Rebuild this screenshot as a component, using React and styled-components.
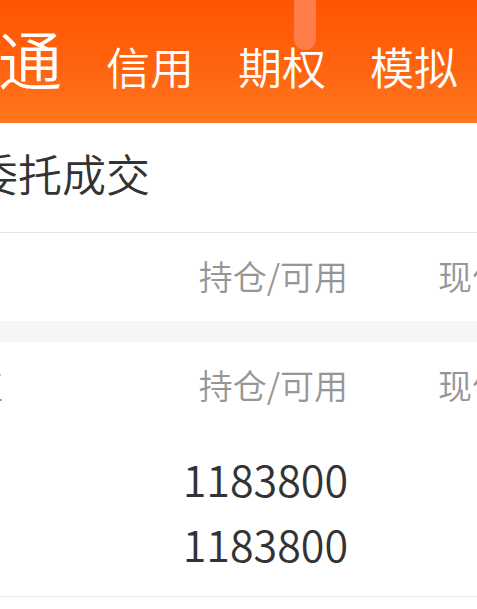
import React from "react";
import styled, { createGlobalStyle } from "styled-components";

const Global = createGlobalStyle`
  html, body { margin: 0; padding: 0; background: #ffffff; overflow: hidden; }
  body { font-family: "Noto Sans CJK SC", "Noto Sans", sans-serif; font-weight: 350; }
  * { box-sizing: border-box; }
`;

const Page = styled.div`
  width: 477px;
  height: 609px;
  overflow: hidden;
  position: relative;
  background: #ffffff;
`;

const Header = styled.header`
  position: relative;
  height: 123px;
  background: linear-gradient(180deg, #ff5500 0%, #ff6410 55%, #ff761f 100%);
  display: flex;
  align-items: baseline;
  gap: 44px;
  padding-top: 25px;
  color: #ffffff;
  white-space: nowrap;
`;

const Tab = styled.span`
  font-size: ${(p) => (p.$active ? "64px" : "44px")};
  line-height: 1;
  margin-left: ${(p) => (p.$active ? "-2px" : "0")};
  font-weight: 350;
`;

const ScrollPill = styled.div`
  position: absolute;
  left: 294px;
  top: 0;
  width: 22px;
  height: 50px;
  border-radius: 0 0 11px 11px;
  background: #ff7d4a;
`;

const TitleRow = styled.div`
  height: 110px;
  display: flex;
  align-items: center;
  border-bottom: 1px solid #e3e3e3;
  white-space: nowrap;
`;

const Title = styled.span`
  font-size: 44px;
  line-height: 1;
  color: #333333;
  margin-left: -26px;
  margin-top: -10px;
`;

const ColRow = styled.div`
  display: flex;
  align-items: center;
  white-space: nowrap;
  height: ${(p) => p.$h || "auto"};
`;

const LeadCell = styled.div`
  flex: 0 0 100px;
  margin-left: -97px;
  text-align: right;
  overflow: hidden;
`;

const AmountCell = styled.div`
  flex: 0 0 345px;
  text-align: right;
`;

const PriceCell = styled.div`
  flex: 0 0 auto;
  margin-left: 90px;
`;

const HeadText = styled.span`
  font-size: 34px;
  line-height: 1;
  color: #969696;
`;

const Gap = styled.div`
  height: 21px;
  background: #f5f6f8;
`;

const DataBlock = styled.div`
  padding: 16px 0 20px;
  border-bottom: 1px solid #e6e6e6;
`;

const NumLine = styled.div`
  font-size: 43px;
  line-height: 65px;
  color: #333333;
`;

const HeadRow = ({ lead }) => (
  <ColRow $h="88px">
    <LeadCell>{lead ? <HeadText>{lead}</HeadText> : null}</LeadCell>
    <AmountCell>
      <HeadText>持仓/可用</HeadText>
    </AmountCell>
    <PriceCell>
      <HeadText>现价/成本</HeadText>
    </PriceCell>
  </ColRow>
);

export default function App() {
  return (
    <Page>
      <Global />
      <Header>
        <Tab $active>通</Tab>
        <Tab>信用</Tab>
        <Tab>期权</Tab>
        <Tab>模拟</Tab>
        <ScrollPill />
      </Header>
      <TitleRow>
        <Title>委托成交</Title>
      </TitleRow>
      <HeadRow />
      <Gap />
      <HeadRow lead="市值" />
      <DataBlock>
        <ColRow>
          <LeadCell />
          <AmountCell>
            <NumLine>1183800</NumLine>
            <NumLine>1183800</NumLine>
          </AmountCell>
        </ColRow>
      </DataBlock>
    </Page>
  );
}
